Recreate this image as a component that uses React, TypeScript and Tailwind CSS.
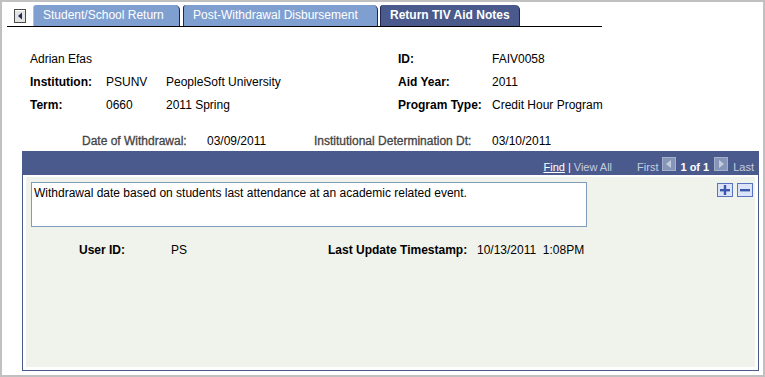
import React from "react";

function BackIcon() {
  return (
    <svg width="12" height="14" viewBox="0 0 12 14" className="block">
      <rect x="0.5" y="0.5" width="11" height="13" fill="#e4e4e4" stroke="#4a4a4a" />
      <rect x="1" y="1" width="10" height="1" fill="#ffffff" />
      <polygon points="4,7 8,3.5 8,10.5" fill="#202b55" />
    </svg>
  );
}

function NavBox({ dir }: { dir: "l" | "r" }) {
  return (
    <svg width="14" height="14" viewBox="0 0 14 14" className="block">
      <rect x="0" y="0" width="14" height="14" fill="#8796b8" />
      <rect x="0.5" y="0.5" width="13" height="13" fill="none" stroke="#a2b0cc" />
      {dir === "l" ? (
        <polygon points="4,7 9,3 9,11" fill="#c4cde0" />
      ) : (
        <polygon points="10,7 5,3 5,11" fill="#c4cde0" />
      )}
    </svg>
  );
}

function PlusMinus({ plus }: { plus: boolean }) {
  return (
    <div className="w-[16px] h-[14px] border border-[#5a74c4] bg-[#dbe4f8] flex items-center justify-center">
      <svg width="10" height="10" viewBox="0 0 10 10" className="block">
        <rect x="0" y="4" width="10" height="2.4" fill="#3b57ad" />
        {plus && <rect x="3.8" y="0" width="2.4" height="10" fill="#3b57ad" />}
      </svg>
    </div>
  );
}

export default function App() {
  return (
    <div className="w-[765px] h-[377px] border-2 border-[#c0c0c0] bg-white font-['Liberation_Sans',Arial,sans-serif] text-[12px] text-black overflow-hidden">
      {/* Tabs */}
      <div className="mt-[3px] ml-[5px] w-[595px] h-[22px] border-b border-black flex items-end">
        <div className="ml-[7px] self-start mt-[4px]">
          <BackIcon />
        </div>
        <div className="ml-[7px] w-[147px] h-[21px] bg-[#7f9fd0] border-r border-[#1e2850] border-l border-l-[#a9bfe4] rounded-tl-[3px] rounded-tr-[5px] text-white pl-[9px] leading-[21px] whitespace-nowrap">
          Student/School Return
        </div>
        <div className="ml-[3px] w-[195px] h-[21px] bg-[#7f9fd0] border-r border-[#1e2850] border-l border-l-[#1e2850] rounded-tl-[3px] rounded-tr-[5px] text-white pl-[9px] leading-[21px] whitespace-nowrap">
          Post-Withdrawal Disbursement
        </div>
        <div className="ml-[2px] w-[140px] h-[21px] bg-[#4a5a8c] border-r border-[#1e2850] border-l border-l-[#1e2850] rounded-tl-[3px] rounded-tr-[5px] text-white font-bold pl-[9px] leading-[21px] whitespace-nowrap">
          Return TIV Aid Notes
        </div>
      </div>

      {/* Header fields */}
      <div className="mt-[21px] ml-[28px] grid grid-cols-[76px_60px_232px_94px_auto] auto-rows-[23px] leading-[23px] whitespace-nowrap">
        <div className="col-span-3">Adrian Efas</div>
        <div className="font-bold">ID:</div>
        <div>FAIV0058</div>

        <div className="font-bold">Institution:</div>
        <div>PSUNV</div>
        <div>PeopleSoft University</div>
        <div className="font-bold">Aid Year:</div>
        <div>2011</div>

        <div className="font-bold">Term:</div>
        <div>0660</div>
        <div>2011 Spring</div>
        <div className="font-bold">Program Type:</div>
        <div>Credit Hour Program</div>
      </div>

      {/* Date row */}
      <div className="mt-[12px] ml-[80px] flex h-[22px] pt-[5px] leading-[14px] whitespace-nowrap">
        <div className="w-[125px] text-[#444444] [-webkit-text-stroke:0.3px_#444444]">Date of Withdrawal:</div>
        <div className="w-[107px]">03/09/2011</div>
        <div className="w-[178px] text-[#444444] [-webkit-text-stroke:0.3px_#444444]">Institutional Determination Dt:</div>
        <div>03/10/2011</div>
      </div>

      {/* Panel */}
      <div className="ml-[20px] w-[737px] h-[220px] border border-[#4a5a8c] flex flex-col">
        <div className="h-[23px] bg-[#4a5a8c] flex items-end justify-end pr-[4px] pb-[1px] text-[11px] leading-[14px] whitespace-nowrap">
          <span className="text-white underline">Find</span>
          <span className="text-white mx-[3px]">|</span>
          <span className="text-[#c6cde0]">View All</span>
          <span className="text-[#c6cde0] ml-[25px]">First</span>
          <span className="ml-[4px] mb-[3px]">
            <NavBox dir="l" />
          </span>
          <span className="text-white font-bold ml-[4px]">1 of 1</span>
          <span className="ml-[5px] mb-[3px]">
            <NavBox dir="r" />
          </span>
          <span className="text-[#c6cde0] ml-[5px]">Last</span>
        </div>
        <div className="flex-1 bg-white pt-[2px] px-[3px] pb-[3px] flex">
          <div className="flex-1 bg-[#f0f2ec] flex flex-col">
            <div className="flex justify-between">
              <div className="ml-[5px] mt-[5px] w-[556px] h-[45px] border border-[#7f9db9] bg-white pl-[2px] pt-[3px] leading-[14px] whitespace-nowrap">
                Withdrawal date based on students last attendance at an academic related event.
              </div>
              <div className="mt-[6px] mr-[2px] flex gap-[4px]">
                <PlusMinus plus={true} />
                <PlusMinus plus={false} />
              </div>
            </div>
            <div className="mt-[16px] ml-[53px] flex leading-[14px] whitespace-nowrap">
              <div className="w-[92px] font-bold">User ID:</div>
              <div className="w-[157px]">PS</div>
              <div className="w-[149px] font-bold">Last Update Timestamp:</div>
              <div>10/13/2011&nbsp;&nbsp;1:08PM</div>
            </div>
          </div>
        </div>
      </div>
    </div>
  );
}
